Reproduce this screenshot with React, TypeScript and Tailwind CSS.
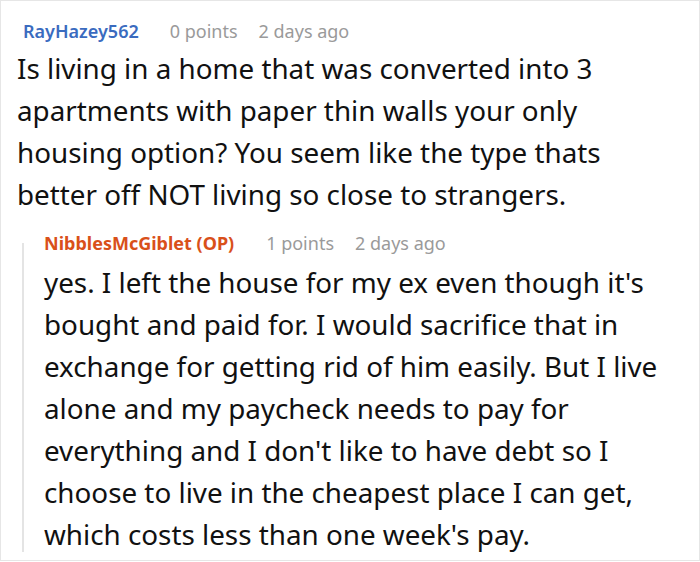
import React from 'react';

const parentLines = [
  'Is living in a home that was converted into 3',
  'apartments with paper thin walls your only',
  'housing option? You seem like the type thats',
  'better off NOT living so close to strangers.',
];

const replyLines = [
  "yes. I left the house for my ex even though it's",
  'bought and paid for. I would sacrifice that in',
  'exchange for getting rid of him easily. But I live',
  'alone and my paycheck needs to pay for',
  "everything and I don't like to have debt so I",
  'choose to live in the cheapest place I can get,',
  "which costs less than one week's pay.",
];

const App = () => {
  return (
    <div className="w-[700px] h-[562px] bg-white" style={{ fontFamily: '"Noto Sans", sans-serif' }}>
      <div className="h-[561px] border border-[#e6e6e6] pl-[16px] pt-[17px]">
        {/* parent comment */}
        <div className="flex items-center text-[18px] leading-[26px] pl-[6px]">
          <span className="font-semibold text-[#3a6bbf] mr-[31px]">RayHazey562</span>
          <span className="text-[#9a9a9a] mr-[21px]">0 points</span>
          <span className="text-[#9a9a9a]">2 days ago</span>
        </div>
        <p className="mt-[3px] text-[27.8px] leading-[42px] text-[#111]">
          {parentLines.map((line) => (
            <span key={line} className="block">{line}</span>
          ))}
        </p>

        {/* reply */}
        <div className="relative mt-[16px] ml-[5px] pl-[22px] before:absolute before:left-0 before:top-[12px] before:bottom-[3px] before:w-[2px] before:bg-[#e4e4e4]">
          <div className="flex items-center text-[18px] leading-[24px]">
            <span className="font-bold text-[#d9501a] mr-[32px]">NibblesMcGiblet (OP)</span>
            <span className="text-[#9a9a9a] mr-[21px]">1 points</span>
            <span className="text-[#9a9a9a]">2 days ago</span>
          </div>
          <p className="mt-[6px] text-[27.8px] leading-[42px] text-[#111]">
            {replyLines.map((line) => (
              <span key={line} className="block">{line}</span>
            ))}
          </p>
        </div>
      </div>
    </div>
  );
};

export default App;
